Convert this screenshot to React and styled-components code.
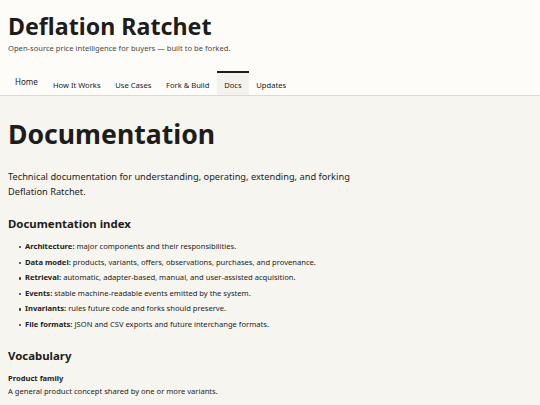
import React from 'react';
import styled, { createGlobalStyle } from 'styled-components';

const GlobalStyle = createGlobalStyle`
  html, body {
    margin: 0;
    padding: 0;
    background: #f6f5f0;
  }
  body {
    font-family: "Noto Sans", "Open Sans", sans-serif;
    color: #1d1d1b;
  }
`

const Header = styled.header`
  background: #fdfcf9;
  border-bottom: 1px solid #dcdad3;
  padding: 12px 8px 0;
`

const SiteTitle = styled.h1`
  margin: 0;
  font-size: 23.2px;
  line-height: 29px;
  font-weight: 700;
`

const Tagline = styled.p`
  margin: 0;
  font-size: 7.6px;
  line-height: 14px;
  color: #4a4945;
`

const Nav = styled.nav`
  display: flex;
  align-items: flex-end;
  margin-top: 16px;
`

const NavLink = styled.a`
  display: block;
  padding: ${p => (p.$raised ? '0 7.8px 5.3px 7px' : '0 7.35px 2px')};
  font-size: ${p => (p.$raised ? '8px' : '7.6px')};
  line-height: 16px;
  color: #222;
  text-decoration: none;
  border-top: 2px solid ${p => (p.$active ? '#1d1d1b' : 'transparent')};
  background: ${p => (p.$active ? '#f3f2ed' : 'transparent')};
  padding-top: ${p => (p.$active ? '4px' : '0')};
`

const Main = styled.main`
  padding: 20px 8px 0;
`

const PageTitle = styled.h2`
  margin: 0;
  font-size: 26.6px;
  line-height: 36px;
  font-weight: 700;
`

const Lead = styled.p`
  margin: 17px 0 0;
  max-width: 350px;
  font-size: 9.25px;
  line-height: 15px;
`

const SectionTitle = styled.h3`
  margin: ${p => p.$top || '16px'} 0 0;
  font-size: 11.4px;
  line-height: 18px;
  font-weight: 700;
`

const List = styled.ul`
  margin: 6px 0 0;
  padding: 0 0 0 17px;
  list-style: none;
`

const Item = styled.li`
  position: relative;
  font-size: 7.6px;
  line-height: 15.6px;

  &::before {
    content: '';
    position: absolute;
    left: -6.5px;
    top: 7px;
    width: 2.4px;
    height: 2.4px;
    border-radius: 50%;
    background: #333;
  }

  strong {
    font-weight: 700;
  }
`

const Glossary = styled.dl`
  margin: 0;
`

const Term = styled.dt`
  margin-top: 7.5px;
  font-size: 7.6px;
  line-height: 13px;
  font-weight: 700;
`

const Definition = styled.dd`
  margin: 0;
  font-size: 7.6px;
  line-height: 12px;
`

const navItems = ['Home', 'How It Works', 'Use Cases', 'Fork & Build', 'Docs', 'Updates'];

const indexItems = [
  ['Architecture:', 'major components and their responsibilities.'],
  ['Data model:', 'products, variants, offers, observations, purchases, and provenance.'],
  ['Retrieval:', 'automatic, adapter-based, manual, and user-assisted acquisition.'],
  ['Events:', 'stable machine-readable events emitted by the system.'],
  ['Invariants:', 'rules future code and forks should preserve.'],
  ['File formats:', 'JSON and CSV exports and future interchange formats.'],
];

export default function App() {
  return (
    <>
      <GlobalStyle />
      <Header>
        <SiteTitle>Deflation Ratchet</SiteTitle>
        <Tagline>Open-source price intelligence for buyers — built to be forked.</Tagline>
        <Nav>
          {navItems.map(name => (
            <NavLink
              key={name}
              href="#"
              $raised={name === 'Home'}
              $active={name === 'Docs'}
            >
              {name}
            </NavLink>
          ))}
        </Nav>
      </Header>
      <Main>
        <PageTitle>Documentation</PageTitle>
        <Lead>
          Technical documentation for understanding, operating, extending, and forking
          Deflation Ratchet.
        </Lead>
        <SectionTitle>Documentation index</SectionTitle>
        <List>
          {indexItems.map(([label, text]) => (
            <Item key={label}>
              <strong>{label}</strong> {text}
            </Item>
          ))}
        </List>
        <SectionTitle $top="14px">Vocabulary</SectionTitle>
        <Glossary>
          <Term>Product family</Term>
          <Definition>A general product concept shared by one or more variants.</Definition>
        </Glossary>
      </Main>
    </>
  );
}
